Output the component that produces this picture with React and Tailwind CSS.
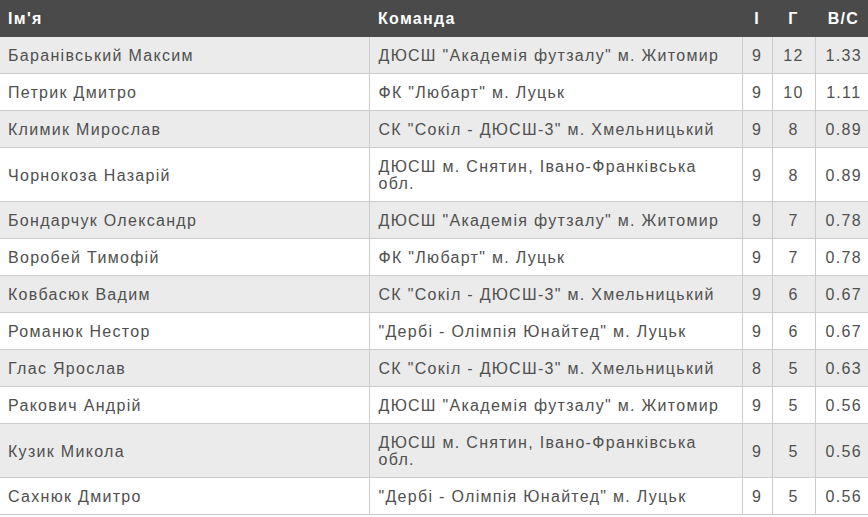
import React from "react";

const rows = [
  ["Баранівський Максим", 'ДЮСШ "Академія футзалу" м. Житомир', 9, 12, "1.33"],
  ["Петрик Дмитро", 'ФК "Любарт" м. Луцьк', 9, 10, "1.11"],
  ["Климик Мирослав", 'СК "Сокіл - ДЮСШ-3" м. Хмельницький', 9, 8, "0.89"],
  ["Чорнокоза Назарій", "ДЮСШ м. Снятин, Івано-Франківська обл.", 9, 8, "0.89"],
  ["Бондарчук Олександр", 'ДЮСШ "Академія футзалу" м. Житомир', 9, 7, "0.78"],
  ["Воробей Тимофій", 'ФК "Любарт" м. Луцьк', 9, 7, "0.78"],
  ["Ковбасюк Вадим", 'СК "Сокіл - ДЮСШ-3" м. Хмельницький', 9, 6, "0.67"],
  ["Романюк Нестор", '"Дербі - Олімпія Юнайтед" м. Луцьк', 9, 6, "0.67"],
  ["Глас Ярослав", 'СК "Сокіл - ДЮСШ-3" м. Хмельницький', 8, 5, "0.63"],
  ["Ракович Андрій", 'ДЮСШ "Академія футзалу" м. Житомир', 9, 5, "0.56"],
  ["Кузик Микола", "ДЮСШ м. Снятин, Івано-Франківська обл.", 9, 5, "0.56"],
  ["Сахнюк Дмитро", '"Дербі - Олімпія Юнайтед" м. Луцьк', 9, 5, "0.56"],
];

export default function App() {
  return (
    <div className="w-[868px] bg-white font-['Liberation_Sans',Arial,sans-serif]">
      <table className="w-[868px] table-fixed border-collapse text-[16px] leading-[17px] tracking-[1.3px] text-[#505050]">
        <colgroup>
          <col className="w-[369px]" />
          <col className="w-[373px]" />
          <col className="w-[30px]" />
          <col className="w-[43px]" />
          <col className="w-[53px]" />
        </colgroup>
        <thead>
          <tr className="h-[37px] bg-[#4a4a4a] text-left font-bold text-white">
            <th className="pl-2 pr-2 pb-px text-left">Ім'я</th>
            <th className="pl-[9px] pr-2 pb-px text-left">Команда</th>
            <th className="pb-px text-center">І</th>
            <th className="pb-px text-center">Г</th>
            <th className="pb-px pl-1 text-center">В/С</th>
          </tr>
        </thead>
        <tbody>
          {rows.map((r, i) => (
            <tr
              key={i}
              className={`border-b border-[#cccccc] ${i % 2 === 0 ? "bg-[#ebebeb]" : "bg-white"}`}
            >
              <td className="pl-2 pr-2 pt-[10px] pb-[9px] align-middle">{r[0]}</td>
              <td className="border-l border-[#cccccc] pl-[9px] pr-2 pt-[10px] pb-[9px] align-middle">{r[1]}</td>
              <td className="border-l border-[#cccccc] pt-[10px] pb-[9px] text-center align-middle">{r[2]}</td>
              <td className="border-l border-[#cccccc] pt-[10px] pb-[9px] text-center align-middle">{r[3]}</td>
              <td className="border-l border-[#cccccc] pl-1 pt-[10px] pb-[9px] text-center align-middle">{r[4]}</td>
            </tr>
          ))}
        </tbody>
      </table>
    </div>
  );
}
